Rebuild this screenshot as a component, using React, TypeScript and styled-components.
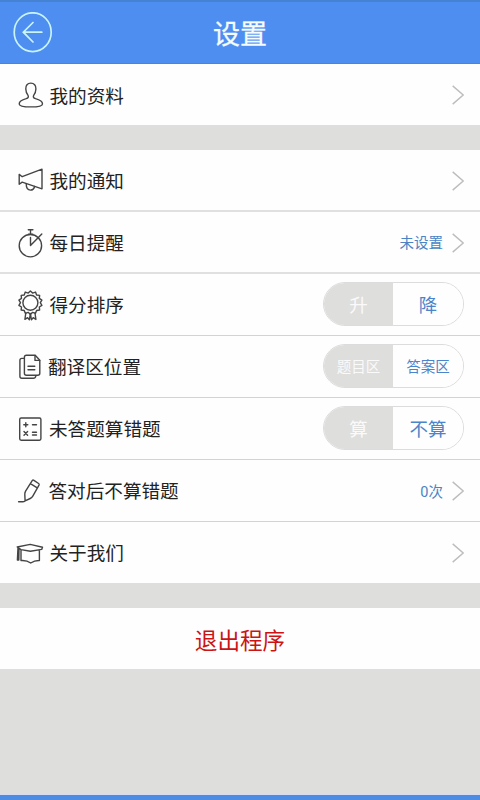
import React from "react";
import styled, { createGlobalStyle } from "styled-components";

const GlobalStyle = createGlobalStyle`
  * { box-sizing: border-box; }
  body {
    margin: 0;
    background: #dededd;
    font-family: Roboto, "Noto Sans CJK SC", sans-serif;
  }
`;

const Screen = styled.div`
  display: flex;
  flex-direction: column;
  width: 480px;
  height: 800px;
  overflow: hidden;
  background: #dededd;
`;

const Header = styled.header`
  display: grid;
  grid-template-columns: 64px 1fr 64px;
  align-items: center;
  height: 64px;
  flex: none;
  background: #4e8ef0;
  border-top: 2px solid #4583d2;
  border-bottom: 1px solid #4784dc;
`;

const Title = styled.h1`
  margin: 5px 0 0;
  text-align: center;
  font-size: 27px;
  line-height: 40px;
  font-weight: 400;
  color: #f4fcff;
  -webkit-text-stroke: 0.3px #f4fcff;
`;

const BackButton = styled.button`
  display: flex;
  width: 40px;
  height: 42px;
  margin: 0 0 0 13px;
  padding: 0;
  border: 0;
  background: none;
`;

const Group = styled.section<{ $gap?: number }>`
  flex: none;
  margin-bottom: ${(p) => p.$gap ?? 0}px;
  background: #fefefe;
`;

const Row = styled.div<{ $height: number; $line?: "thin" | "soft" }>`
  display: flex;
  align-items: center;
  height: ${(p) => p.$height}px;
  padding: 0 16px 0 15px;
  border-bottom: ${(p) =>
    p.$line === "thin" ? "1px solid #d3d3d3" : p.$line === "soft" ? "2px solid #e0e0e0" : "0"};
`;

const Icon = styled.svg`
  width: 30px;
  height: 36px;
  flex: none;
  fill: none;
  stroke: #444;
  stroke-width: 1.4;
  stroke-linejoin: round;
  stroke-linecap: round;
`;

const Label = styled.span<{ $x?: number; $top?: number }>`
  flex: 1;
  margin: ${(p) => p.$top ?? 2}px 0 0 ${(p) => p.$x ?? 4.5}px;
  font-size: 18.6px;
  line-height: 28px;
  color: #222;
`;

const Value = styled.span`
  margin: 4px 9px 0 0;
  font-size: 14.5px;
  line-height: 22px;
  color: #4a84c4;
`;

const Arrow = styled.svg`
  width: 12px;
  height: 20px;
  flex: none;
  margin-top: 1px;
  fill: none;
  stroke: #bdbdbd;
  stroke-width: 1.4;
`;

const Toggle = styled.div`
  display: grid;
  grid-template-columns: 69px 1fr;
  width: 141px;
  height: 44px;
  flex: none;
  margin-bottom: 2px;
  overflow: hidden;
  border: 1.5px solid #dcdcdc;
  border-radius: 22px;
`;

const Option = styled.span<{ $off?: boolean; $small?: boolean }>`
  display: flex;
  align-items: center;
  justify-content: center;
  font-size: ${(p) => (p.$small ? 14.5 : 18.5)}px;
  color: ${(p) => (p.$off ? "#fafafa" : "#4a84cb")};
  background: ${(p) => (p.$off ? "#dededd" : "#fefefe")};
`;

const ExitButton = styled.button`
  height: 61px;
  flex: none;
  padding: 2px 0 0;
  border: 0;
  background: #fefefe;
  color: #cc1414;
  font: inherit;
  font-size: 22.6px;
`;

const BottomBar = styled.div`
  height: 6px;
  flex: none;
  margin-top: auto;
  background: #4e8ce4;
  border-top: 1px solid #d5dcf2;
`;

const Chevron = () => (
  <Arrow viewBox="0 0 12 20">
    <path d="M.7.9 11.2 10 .7 19.1" />
  </Arrow>
);

const UserIcon = () => (
  <Icon viewBox="0 0 30 36">
    <path d="M15.8 6.1c-3.3 0-5.2 2.5-5 5.8.1 2.8 1 4.8 2.1 6.3 1 1.6.3 2.9-1.7 3.5-4 1.1-7 2.5-7 5.2 0 2 4.3 3 11.6 3s11.7-1 11.7-3c0-2.7-3-4.1-7-5.2-2-.6-2.7-1.9-1.7-3.5 1.1-1.5 2-3.5 2.1-6.3.2-3.3-1.8-5.8-5.1-5.8Z" />
  </Icon>
);

const MegaphoneIcon = () => (
  <Icon viewBox="0 0 30 36">
    <path d="M4.2 12.4v9.8l3-2.1L27 26.8V7.2L7.2 14.7Z" />
    <path d="M11.2 21.8c0 3.9 1.6 6.3 4.3 6.3 2.1 0 3.6-1.3 4.1-3.6" />
  </Icon>
);

const StopwatchIcon = () => (
  <Icon viewBox="0 0 30 36">
    <circle cx="15.4" cy="21.7" r="11.2" />
    <path d="M13.3 5.8h4.6M15.5 5.8v4.6M13.4 10.3h4.4M15.5 13.4v8.2L26.8 10" />
  </Icon>
);

const SCALLOPS = 14;
const scallopPath =
  Array.from({ length: SCALLOPS }, (_, i) => {
    const step = (Math.PI * 2) / SCALLOPS;
    const point = (angle: number, r: number) =>
      `${(15.4 + r * Math.sin(angle)).toFixed(2)} ${(15.7 - r * Math.cos(angle)).toFixed(2)}`;
    return `${i === 0 ? "M" : "L"}${point(i * step, 11.8)}L${point((i + 0.5) * step, 9.9)}`;
  }).join("") + "Z";

const MedalIcon = () => (
  <Icon viewBox="0 0 30 36">
    <path d={scallopPath} />
    <circle cx="15.4" cy="15.7" r="7.5" />
    <path d="M10.8 26 9.9 32.4l2.7-1.7 1.8 2 1-6.2 1 6.2 1.8-2 2.7 1.7L20 26" />
  </Icon>
);

const DocumentsIcon = () => (
  <Icon viewBox="0 0 30 36">
    <path d="M11.4 6.3h8.8l4.6 4.9v13.1q0 2-2 2H11.4q-2 0-2-2V8.3q0-2 2-2Z" />
    <path d="M20 6.5v4.9h4.7M13 17.2h6.8M13 20.7h6.8M9.2 9.4H6.9q-2 0-2 2v15.9q0 2 2 2h11.5q2 0 2.5-2.5" />
  </Icon>
);

const CalculatorIcon = () => (
  <Icon viewBox="0 0 30 36">
    <rect x="4.7" y="7" width="21.2" height="22.2" rx="1.4" />
    <path d="M8.8 13.8h4M10.8 11.8v4M17.5 13.8h4M9 20.5l3.6 3.8M12.6 20.5 9 24.3M17.5 21.2h4M17.5 24h4" />
  </Icon>
);

const PencilIcon = () => (
  <Icon viewBox="0 0 30 36">
    <path d="m17.2 7.6-6.6 10.6q-.9 1.6-.8 3.4l.3 6.3 5.1-2.4q1.7-.8 2.6-2.4l6.2-11q.5-1-.4-1.6l-4.7-3.2q-1-.6-1.7.3ZM15.4 10.6l6.8 4.2M10 27.9q-.9.8-2.4.8H3.6" />
  </Icon>
);

const CapIcon = () => (
  <Icon viewBox="0 0 30 36">
    <path d="m2.2 12 13-2.6 12.3 2.8-.8 2.2-11.3 1.8L6 14.6ZM6 14.8v10.7q5.7-.5 9.7 2.5 4-2.7 8.7-2.5V15M3 12.4 2.4 25h1.4L4 13.6" />
  </Icon>
);

const BackIcon = () => (
  <svg width="40" height="42" viewBox="0 0 40 42" fill="none" stroke="#c8f4fa" strokeWidth="1.7" strokeLinecap="round">
    <ellipse cx="19.7" cy="20.2" rx="18.5" ry="19.4" />
    <path d="M20 10.5 10.3 20.2 20 30M10.5 20.2h18.3" />
  </svg>
);

export default function App() {
  return (
    <Screen>
      <GlobalStyle />
      <Header>
        <BackButton aria-label="返回">
          <BackIcon />
        </BackButton>
        <Title>设置</Title>
      </Header>

      <Group $gap={25}>
        <Row $height={61}>
          <UserIcon />
          <Label $top={4}>我的资料</Label>
          <Chevron />
        </Row>
      </Group>

      <Group $gap={25}>
        <Row $height={62} $line="soft">
          <MegaphoneIcon />
          <Label $top={3}>我的通知</Label>
          <Chevron />
        </Row>
        <Row $height={62} $line="soft">
          <StopwatchIcon />
          <Label $top={3}>每日提醒</Label>
          <Value>未设置</Value>
          <Chevron />
        </Row>
        <Row $height={62} $line="thin">
          <MedalIcon />
          <Label>得分排序</Label>
          <Toggle>
            <Option $off>升</Option>
            <Option>降</Option>
          </Toggle>
        </Row>
        <Row $height={62} $line="thin">
          <DocumentsIcon />
          <Label $x={3}>翻译区位置</Label>
          <Toggle>
            <Option $off $small>题目区</Option>
            <Option $small>答案区</Option>
          </Toggle>
        </Row>
        <Row $height={62} $line="thin">
          <CalculatorIcon />
          <Label $x={4}>未答题算错题</Label>
          <Toggle>
            <Option $off>算</Option>
            <Option>不算</Option>
          </Toggle>
        </Row>
        <Row $height={62} $line="thin">
          <PencilIcon />
          <Label $x={3.5}>答对后不算错题</Label>
          <Value>0次</Value>
          <Chevron />
        </Row>
        <Row $height={61}>
          <CapIcon />
          <Label>关于我们</Label>
          <Chevron />
        </Row>
      </Group>

      <ExitButton>退出程序</ExitButton>
      <BottomBar />
    </Screen>
  );
}
